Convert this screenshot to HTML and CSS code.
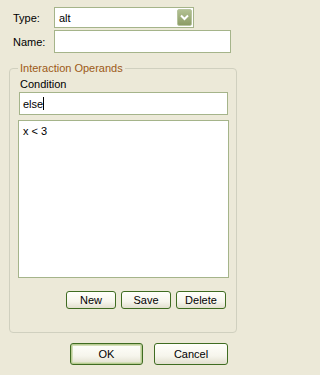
FILE: index.html
```html
<!DOCTYPE html>
<html>
<head>
<meta charset="utf-8">
<link rel="stylesheet" href="styles.css">
</head>
<body>
<div class="dialog">
  <div class="row row-type">
    <label class="label">Type:</label>
    <div class="select">
      <span class="select-value">alt</span>
      <span class="select-btn">
        <svg width="9" height="7" viewBox="0 0 9 7"><path d="M1 1.5 L4.5 5 L8 1.5" fill="none" stroke="#fff" stroke-width="2"/></svg>
      </span>
    </div>
  </div>
  <div class="row row-name">
    <label class="label">Name:</label>
    <div class="input name-input"></div>
  </div>
  <fieldset class="group">
    <legend class="legend">Interaction Operands</legend>
    <div class="cond-label">Condition</div>
    <div class="input cond-input"><span>else</span><span class="caret"></span></div>
    <div class="textarea">x &lt; 3</div>
    <div class="btn-row">
      <button class="btn small">New</button>
      <button class="btn small">Save</button>
      <button class="btn small">Delete</button>
    </div>
  </fieldset>
  <div class="footer">
    <button class="btn big default">OK</button>
    <button class="btn big">Cancel</button>
  </div>
</div>
</body>
</html>
```
FILE: styles.css
```css
html, body {
  margin: 0;
  padding: 0;
  background: #ece9d8;
}
body {
  width: 241px;
  height: 375px;
  overflow: hidden;
  font-family: "Liberation Sans", Arial, sans-serif;
  font-size: 11px;
  color: #000;
}
.dialog {
  padding-top: 7px;
}
.row {
  display: flex;
  align-items: center;
}
.row-name {
  margin-top: 2px;
}
.label {
  width: 41px;
  padding-left: 13px;
}
.select {
  width: 140px;
  height: 21px;
  box-sizing: border-box;
  border: 1px solid #a5b48a;
  background: #fff;
  display: flex;
  align-items: center;
  justify-content: space-between;
  padding: 0 1px 0 4px;
}
.select-btn {
  width: 15px;
  height: 17px;
  box-sizing: border-box;
  border: 1px solid #b7c49e;
  border-radius: 2px;
  background: linear-gradient(#b3c193, #8c9c66);
  display: flex;
  align-items: center;
  justify-content: center;
}
.input {
  background: #fff;
  border: 1px solid #a5b48a;
  box-sizing: border-box;
}
.name-input {
  width: 177px;
  height: 23px;
}
.group {
  margin: 9px 0 0 9px;
  width: 228px;
  box-sizing: border-box;
  border: 1px solid #d0d0bf;
  border-radius: 4px;
  padding: 0 8px 17px 9px;
  height: 271px;
}
.legend {
  color: #9c5a16;
  padding: 0 2px;
  margin-left: -1px;
  line-height: 13px;
}
.cond-label {
  margin-top: 3px;
  padding-left: 1px;
  line-height: 13px;
}
.cond-input {
  margin-top: 1px;
  height: 23px;
  display: flex;
  align-items: center;
  padding-left: 3px;
}
.caret {
  display: inline-block;
  width: 1px;
  height: 13px;
  background: #000;
}
.textarea {
  margin: 5px -1px 0 -1px;
  height: 158px;
  background: #fff;
  border: 1px solid #a5b48a;
  box-sizing: border-box;
  padding: 4px 0 0 4px;
  line-height: 13px;
}
.btn-row {
  display: flex;
  justify-content: flex-end;
  gap: 5px;
  margin-top: 13px;
  padding-right: 2px;
}
.btn {
  font-family: "Liberation Sans", Arial, sans-serif;
  font-size: 11px;
  color: #000;
  border: 1px solid #3f6c21;
  border-radius: 3px;
  background: linear-gradient(#fffffb 0%, #f6f5ec 60%, #e2dfcf 100%);
  padding: 0;
  box-sizing: border-box;
}
.small {
  width: 50px;
  height: 18px;
}
.footer {
  display: flex;
  gap: 11px;
  margin: 10px 0 0 70px;
}
.big {
  width: 73px;
  height: 22px;
}
.footer .big + .big {
  width: 74px;
}
.default {
  box-shadow: inset 0 0 0 1px #b9cb92, inset 0 0 0 2px #d3dfb8;
}
```
